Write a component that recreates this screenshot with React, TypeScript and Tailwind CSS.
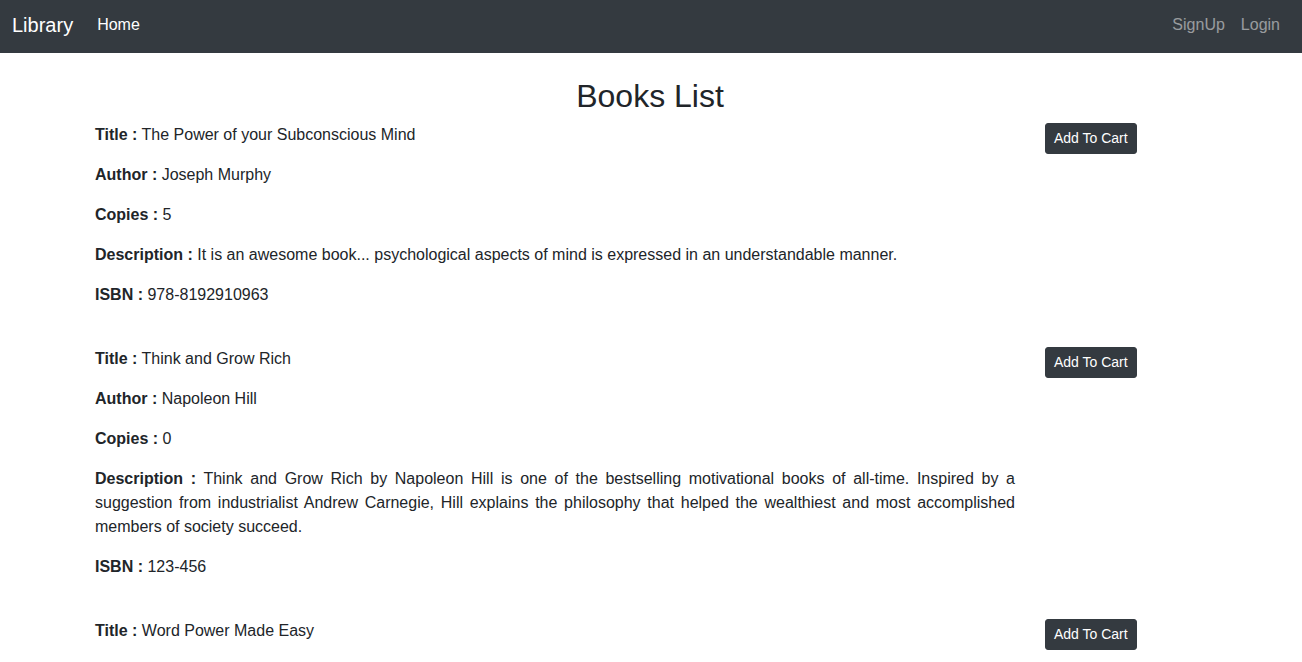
import React from "react";

type Book = {
  title: string;
  author: string;
  copies: number;
  description: string;
  isbn: string;
};

const books: Book[] = [
  {
    title: "The Power of your Subconscious Mind",
    author: "Joseph Murphy",
    copies: 5,
    description:
      "It is an awesome book... psychological aspects of mind is expressed in an understandable manner.",
    isbn: "978-8192910963",
  },
  {
    title: "Think and Grow Rich",
    author: "Napoleon Hill",
    copies: 0,
    description:
      "Think and Grow Rich by Napoleon Hill is one of the bestselling motivational books of all-time. Inspired by a suggestion from industrialist Andrew Carnegie, Hill explains the philosophy that helped the wealthiest and most accomplished members of society succeed.",
    isbn: "123-456",
  },
  {
    title: "Word Power Made Easy",
    author: "Norman Lewis",
    copies: 3,
    description: "A complete handbook for building a superior vocabulary.",
    isbn: "978-8183071024",
  },
];

function Field({ label, value }: { label: string; value: React.ReactNode }) {
  return (
    <p className="mb-4 text-justify">
      <b className="font-bold">{label} :</b> {value}
    </p>
  );
}

function BookItem({ book }: { book: Book }) {
  return (
    <div className="flex pb-6">
      <div className="w-[920px]">
        <Field label="Title" value={book.title} />
        <Field label="Author" value={book.author} />
        <Field label="Copies" value={book.copies} />
        <Field label="Description" value={book.description} />
        <Field label="ISBN" value={book.isbn} />
      </div>
      <div className="ml-[30px]">
        <button className="rounded-[3px] bg-[#343a40] px-2 py-1 text-[14px] leading-[21px] text-white border border-[#343a40]">
          Add To Cart
        </button>
      </div>
    </div>
  );
}

export default function App() {
  return (
    <div
      className="min-h-screen bg-white text-[16px] leading-6 text-[#212529]"
      style={{ fontFamily: '"Liberation Sans", Arial, sans-serif' }}
    >
      {/* Navbar */}
      <nav className="flex h-[53px] items-center bg-[#343a40] pl-3 pr-[14px] pb-[3px]">
        <a className="mr-4 text-[20px] leading-[30px] text-white">Library</a>
        <a className="px-2 text-white">Home</a>
        <div className="ml-auto flex">
          <a className="px-2 text-white/50">SignUp</a>
          <a className="px-2 text-white/50">Login</a>
        </div>
      </nav>

      {/* Content */}
      <div className="mx-auto w-[1140px] pl-[14px] pr-[16px]">
        <h2 className="mt-6 mb-2 text-center text-[32px] leading-[38.4px] font-medium">
          Books List
        </h2>
        {books.map((book) => (
          <BookItem key={book.isbn} book={book} />
        ))}
      </div>
    </div>
  );
}
